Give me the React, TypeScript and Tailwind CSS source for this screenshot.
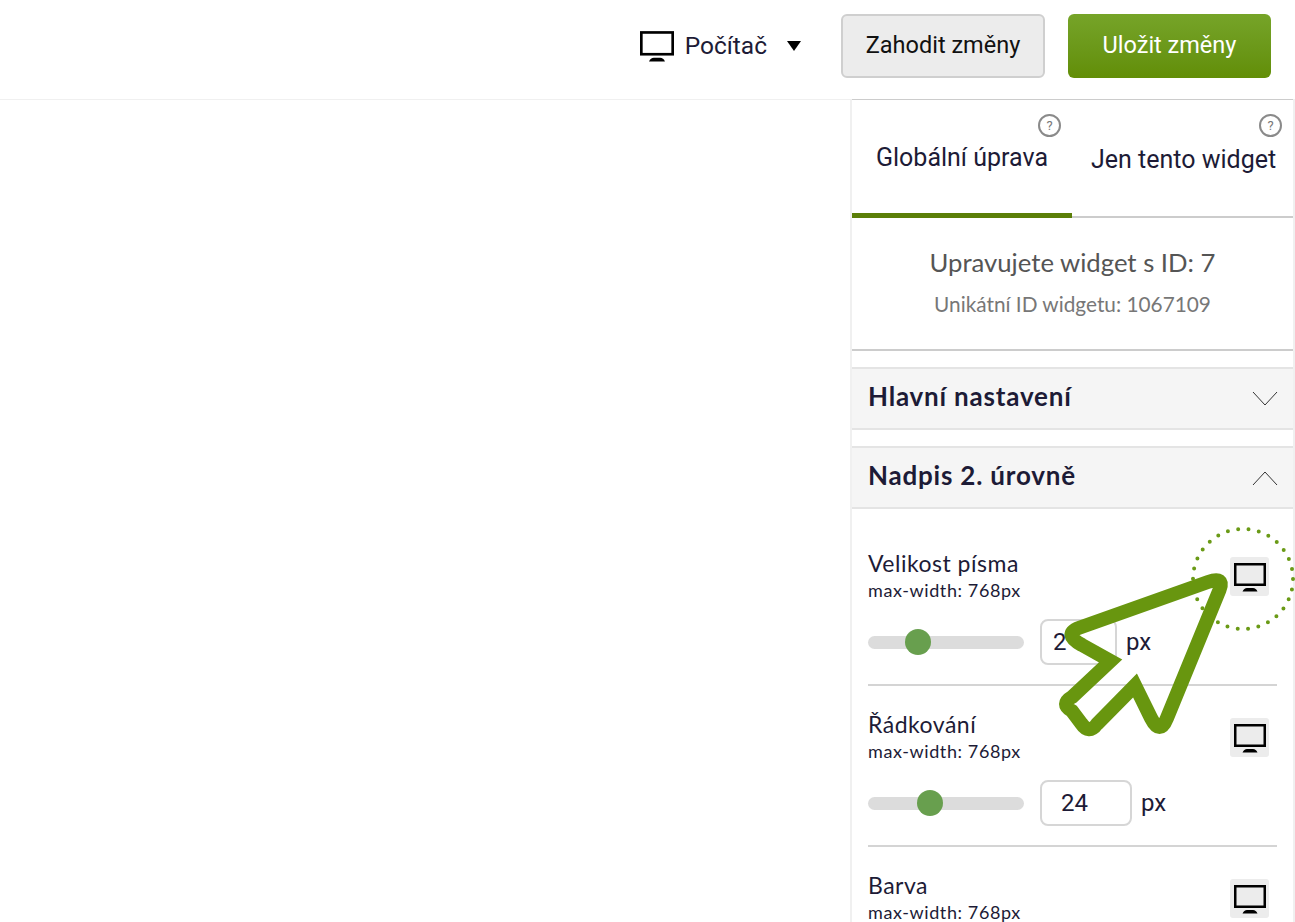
import React from 'react';

const Monitor: React.FC<{ size?: number }> = ({ size = 32 }) => (
  <svg width={size} height={size} viewBox="0 0 32 32">
    <rect x="1.25" y="3.25" width="29.5" height="20.5" fill="none" stroke="#000" strokeWidth="2.5" />
    <path d="M8.5 30.5 Q10 27 13 27 H19 Q22 27 23.5 30.5 Z" fill="#000" />
  </svg>
);

const Help: React.FC = () => (
  <span className="absolute top-[14px] right-[11px] flex h-[23px] w-[23px] items-center justify-center rounded-full border-2 border-[#8a8a8a] text-[13px] leading-none text-[#777] font-['Roboto',sans-serif]">
    ?
  </span>
);

const Chevron: React.FC<{ up?: boolean }> = ({ up }) => (
  <svg width="26" height="16" viewBox="0 0 26 16" fill="none" stroke="#333" strokeWidth="1">
    <path d={up ? 'M1 15 L13 2 L25 15' : 'M1 1 L13 14 L25 1'} />
  </svg>
);

const AccordionHead: React.FC<{ title: string; up?: boolean }> = ({ title, up }) => (
  <div className="flex h-[63px] items-center justify-between border-y-2 border-[#e4e4e4] bg-[#f5f5f5] pl-[16px] pr-[15px]">
    <span className="-mt-[4px] text-[26px] font-bold tracking-[0.8px] text-[#1d1b36]">{title}</span>
    <Chevron up={up} />
  </div>
);

const Setting: React.FC<{ label: string; value?: string; percent?: number; inputClass?: string }> = ({
  label,
  value,
  percent,
  inputClass,
}) => (
  <div className="px-[16px]">
    <div className="flex items-start justify-between pr-[8px]">
      <div>
        <div className="text-[23px] leading-[30px] tracking-[0.5px] text-[#1d1b36]">{label}</div>
        <div className="mt-[1px] text-[18px] leading-[22px] tracking-[0.6px] text-[#1d1b36]">max-width: 768px</div>
      </div>
      <div className="mt-[9px] flex h-[39px] w-[39px] items-center justify-center rounded-[3px] bg-[#ececec]">
        <Monitor />
      </div>
    </div>
    {value && (
      <div className="mt-[18px] flex items-center">
        <div className="relative h-[13px] w-[156px] rounded-full bg-[#dcdcdc]">
          <div
            className="absolute top-1/2 h-[26px] w-[26px] -translate-x-1/2 -translate-y-1/2 rounded-full bg-[#689f4e]"
            style={{ left: `${percent}%` }}
          />
        </div>
        <div
          className={`ml-[16px] flex h-[46px] items-center rounded-[8px] border-2 border-[#d6d6d6] text-[24px] text-[#1d1b36] font-['Roboto',sans-serif] ${inputClass}`}
        >
          {value}
        </div>
        <span className="ml-[9px] text-[24px] text-[#1d1b36] font-['Roboto',sans-serif]">px</span>
      </div>
    )}
  </div>
);

export default function App() {
  return (
    <div className="relative h-[922px] w-[1295px] overflow-hidden bg-white font-['Lato','Noto_Sans',sans-serif]">
      <header className="flex h-[100px] items-center justify-end border-b border-[#f0f0f0] pr-[24px] pb-[7px] font-['Roboto',sans-serif]">
        <div className="flex items-center">
          <Monitor size={34} />
          <span className="ml-[11px] text-[24.5px] text-[#1d1b36]">Počítač</span>
          <span className="ml-[20px] h-0 w-0 border-x-[7.5px] border-t-[10px] border-x-transparent border-t-black" />
        </div>
        <button className="ml-[40px] h-[64px] w-[204px] rounded-[6px] border-2 border-[#cfcfcf] bg-[#ececec] text-[23.5px] text-[#111]">
          Zahodit změny
        </button>
        <button className="ml-[23px] h-[64px] w-[203px] rounded-[6px] bg-gradient-to-b from-[#76a428] to-[#628e06] text-[23.5px] text-white">
          Uložit změny
        </button>
      </header>

      <div className="absolute top-[100px] right-0 bottom-0 w-[445px] border-x-2 border-[#f0f0f0]">
        <div className="-mt-px flex h-[119px] border-y border-b-2 border-[#ccc] font-['Roboto',sans-serif] text-[25px] text-[#1d1b36]">
          <div className="relative -mb-[2px] w-[220px] border-b-[5px] border-[#5b7f08] pt-[39px] text-center whitespace-nowrap">
            Globální úprava
            <Help />
          </div>
          <div className="relative w-[221px] pt-[41px] pl-[19px] whitespace-nowrap">
            Jen tento widget
            <Help />
          </div>
        </div>

        <div className="flex h-[133px] flex-col items-center border-b-2 border-[#ccc] pt-[27px]">
          <div className="text-[25.7px] leading-[34px] text-[#555]">Upravujete widget s ID: 7</div>
          <div className="mt-[11px] text-[20.8px] leading-[27px] text-[#777]">Unikátní ID widgetu: 1067109</div>
        </div>

        <div className="mt-[16px]">
          <AccordionHead title="Hlavní nastavení" />
        </div>
        <div className="mt-[16px]">
          <AccordionHead title="Nadpis 2. úrovně" up />
        </div>

        <div className="pt-[39px]">
          <Setting label="Velikost písma" value="2" percent={32} inputClass="w-[77px] pl-[11px]" />
          <div className="mx-[16px] mt-[19px] mb-[23px] h-[2px] bg-[#d4d4d4]" />
          <Setting label="Řádkování" value="24" percent={40} inputClass="w-[92px] pl-[19px]" />
          <div className="mx-[16px] mt-[19px] mb-[23px] h-[2px] bg-[#d4d4d4]" />
          <Setting label="Barva" />
        </div>
      </div>

      {/* dotted highlight and the big arrow lie over the panel */}
      <svg className="pointer-events-none absolute left-0 top-0" width="1295" height="922" fill="none">
        <circle cx="1243" cy="579" r="50" stroke="#6a9a16" strokeWidth="4" strokeLinecap="round" strokeDasharray="0 10.47" />
        <path
          d="M1082 645 Q1062 634 1080 627.5 L1208 582 Q1225 576 1219.5 590 L1167 718 Q1160 736 1151 718 L1135 685.5 L1097 724 Q1089 735 1081 723 L1072 711 Q1060 704 1072 697 L1110.5 661 Z"
          stroke="#68960f"
          strokeWidth="14"
          strokeLinejoin="miter"
          strokeMiterlimit="6"
        />
      </svg>
    </div>
  );
}
